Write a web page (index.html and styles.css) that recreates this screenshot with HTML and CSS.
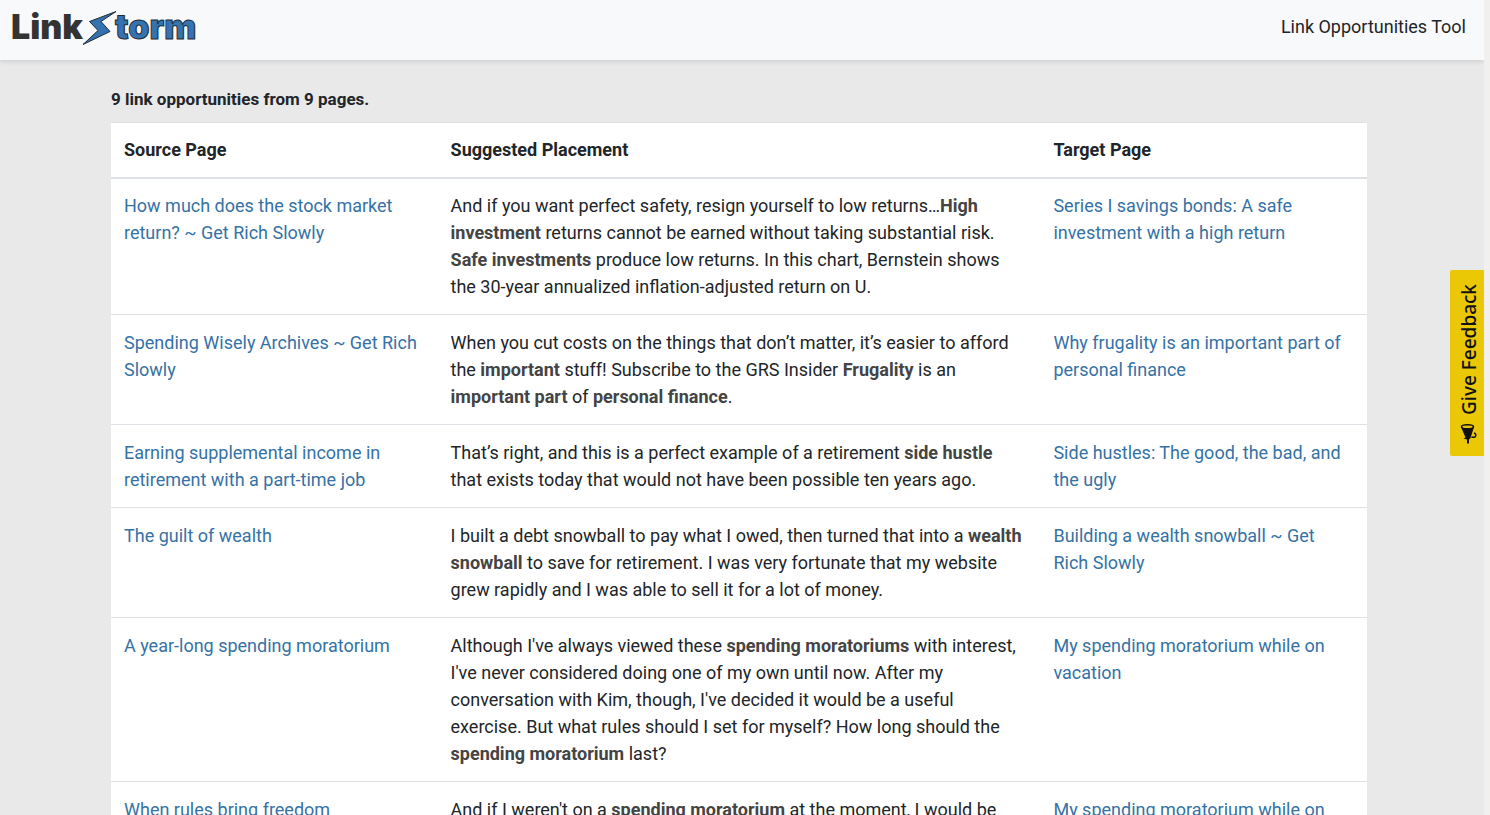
FILE: index.html
```html
<!DOCTYPE html>
<html lang="en">
<head>
<meta charset="utf-8">
<meta name="viewport" content="width=device-width, initial-scale=1">
<title>LinkStorm - Link Opportunities Tool</title>
<link rel="stylesheet" href="styles.css">
</head>
<body>
<div class="page">
  <header class="navbar">
    <svg class="logo" viewBox="0 0 190 42" width="190" height="42" role="img" aria-label="LinkStorm">
      <text class="logo-link" x="-1" y="33">Link</text>
      <path class="logo-bolt" d="M104 5.500 77.500 15.500 86 24.500 71 38.500 98 25.500 89 15.500Z"/>
      <text class="logo-storm" x="103" y="33">torm</text>
    </svg>
    <span class="tool-name">Link Opportunities Tool</span>
  </header>
  <main class="content">
    <h1 class="summary">9 link opportunities from 9 pages.</h1>
    <table class="results">
      <colgroup><col class="col-source"><col class="col-placement"><col class="col-target"></colgroup>
      <thead>
        <tr><th scope="col">Source Page</th><th scope="col">Suggested Placement</th><th scope="col">Target Page</th></tr>
      </thead>
      <tbody>
        <tr>
          <td><a href="#">How much does the stock market return? ~ Get Rich Slowly</a></td>
          <td>And if you want perfect safety, resign yourself to low returns…<b>High investment</b> returns cannot be earned without taking substantial risk. <b>Safe investments</b> produce low returns. In this chart, Bernstein shows the 30-year annualized inflation-adjusted return on U.</td>
          <td><a href="#">Series I savings bonds: A safe investment with a high return</a></td>
        </tr>
        <tr>
          <td><a href="#">Spending Wisely Archives ~ Get Rich Slowly</a></td>
          <td>When you cut costs on the things that don’t matter, it’s easier to afford the <b>important</b> stuff! Subscribe to the GRS Insider <b>Frugality</b> is an <b>important part</b> of <b>personal finance</b>.</td>
          <td><a href="#">Why frugality is an important part of personal finance</a></td>
        </tr>
        <tr>
          <td><a href="#">Earning supplemental income in retirement with a part-time job</a></td>
          <td>That’s right, and this is a perfect example of a retirement <b>side hustle</b> that exists today that would not have been possible ten years ago.</td>
          <td><a href="#">Side hustles: The good, the bad, and the ugly</a></td>
        </tr>
        <tr>
          <td><a href="#">The guilt of wealth</a></td>
          <td>I built a debt snowball to pay what I owed, then turned that into a <b>wealth snowball</b> to save for retirement. I was very fortunate that my website grew rapidly and I was able to sell it for a lot of money.</td>
          <td><a href="#">Building a wealth snowball ~ Get Rich Slowly</a></td>
        </tr>
        <tr>
          <td><a href="#">A year-long spending moratorium</a></td>
          <td>Although I've always viewed these <b>spending moratoriums</b> with interest, I've never considered doing one of my own until now. After my conversation with Kim, though, I've decided it would be a useful exercise. But what rules should I set for myself? How long should the <b>spending moratorium</b> last?</td>
          <td><a href="#">My spending moratorium while on vacation</a></td>
        </tr>
        <tr>
          <td><a href="#">When rules bring freedom</a></td>
          <td>And if I weren't on a <b>spending moratorium</b> at the moment, I would be</td>
          <td><a href="#">My spending moratorium while on vacation</a></td>
        </tr>
      </tbody>
    </table>
  </main>
  <button class="feedback" type="button">
    <svg class="megaphone" viewBox="0 0 18 20" width="18" height="20" aria-hidden="true">
      <path d="M1 3 5.500 13.500 3.500 14.500 7 15.500V19.500H9V15.500L10.500 14 14 3Z" fill="#111"/>
      <ellipse cx="7.500" cy="2.800" rx="6" ry="2" fill="#ebc805" stroke="#111" stroke-width="1.500"/>
      <path d="M14 9c2 .5 2.500 2.500 1 3.800-1 .8-2 .7-3.500.2" fill="none" stroke="#111" stroke-width="1.500"/>
    </svg>
    <span class="feedback-label">Give Feedback</span>
  </button>
</div>
</body>
</html>
```
FILE: styles.css
```css
* { box-sizing: border-box; }

body {
  margin: 0;
  padding-right: 6px;
  height: 100vh;
  overflow: hidden;
  background: #f1f0ef;
  color: #212529;
  font: 18px/27px Roboto, sans-serif;
}

.page {
  position: relative;
  height: 100%;
  overflow: hidden;
  background: #e9e9e9;
}

.navbar {
  display: flex;
  align-items: center;
  justify-content: space-between;
  height: 60px;
  padding: 0 18px 7px 12px;
  background: #f8f9fb;
  box-shadow: 0 2px 4px rgba(0, 0, 0, 0.1);
}

.logo { overflow: visible; }

.logo-link,
.logo-storm {
  font: 900 34px Inter, sans-serif;
}

.logo-link { fill: #333; }

.logo-storm,
.logo-bolt {
  fill: #3572b0;
  stroke: #222b35;
  stroke-width: 1px;
}

.content { padding: 26px 117px 0 111px; }

.summary {
  margin: 0 0 10px;
  font-size: 17px;
  font-weight: 700;
  line-height: 26px;
}

.results {
  width: 100%;
  table-layout: fixed;
  border-collapse: separate;
  border-spacing: 0;
  background: #fff;
}

.col-source,
.col-target { width: 26%; }

.col-placement { width: 48%; }

.results th,
.results td {
  padding: 14px 16px 14px 13px;
  border-top: 1px solid #dee2e6;
  text-align: left;
  vertical-align: top;
}

.results th {
  padding-top: 13px;
  border-bottom: 2px solid #dee2e6;
  font-weight: 700;
}

.results tbody tr:first-child td {
  padding-top: 13px;
  border-top: 0;
}

.results a {
  color: #3572a5;
  text-decoration: none;
}

.results b { color: #444; }

.feedback {
  position: absolute;
  top: 270px;
  right: 0;
  display: flex;
  flex-direction: column-reverse;
  align-items: center;
  gap: 9px;
  width: 34px;
  padding: 14px 0 12px 4px;
  border: 0;
  border-radius: 2px 0 0 2px;
  background: #ebc805;
  color: #111;
  font: 500 19px/24px "Noto Sans", sans-serif;
}

.feedback-label {
  writing-mode: vertical-rl;
  transform: rotate(180deg);
}
```
